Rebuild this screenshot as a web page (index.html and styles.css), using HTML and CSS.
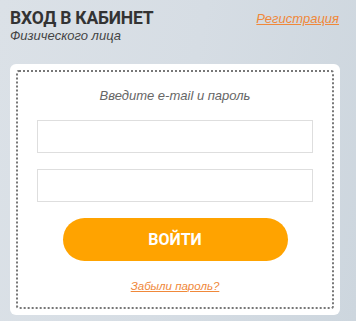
FILE: index.html
```html
<!DOCTYPE html>
<html lang="ru">
  <head>
    <meta charset="UTF-8" />
    <title>Вход в кабинет</title>
    <link rel="stylesheet" href="styles.css">
  </head>
  <body>
    <div class="page">
      <div class="head">
        <div class="title-box">
          <h1 class="title">ВХОД В КАБИНЕТ</h1>
          <p class="subtitle">Физического лица</p>
        </div>
        <a href="#" class="reg">Регистрация</a>
      </div>
      <div class="card">
        <form class="form">
          <p class="hint">Введите e-mail и пароль</p>
          <input type="text" class="field">
          <input type="password" class="field">
          <button type="button" class="btn">ВОЙТИ</button>
          <a href="#" class="forgot">Забыли пароль?</a>
        </form>
      </div>
    </div>
  </body>
</html>
```

FILE: styles.css
```css
* {
  margin: 0;
  padding: 0;
  box-sizing: border-box;
}
html,
body {
  height: 100%;
}
body {
  background: linear-gradient(100deg, #dbe1e7 0%, #d6dde4 50%, #cdd6de 100%);
  font-family: "Liberation Sans", Arial, sans-serif;
  overflow: hidden;
}

.page {
  width: 356px;
  padding: 8px 16px 0 10px;
}

.head {
  display: flex;
  justify-content: space-between;
  align-items: flex-start;
  height: 56px;
}
.title {
  font-family: Roboto, sans-serif;
  font-size: 17.5px;
  font-weight: 700;
  color: #333;
  line-height: 20px;
  letter-spacing: -0.2px;
}
.subtitle {
  font-style: italic;
  font-size: 13px;
  color: #444;
  line-height: 15px;
}
.reg {
  margin-top: 3px;
  margin-right: 1px;
  font-style: italic;
  font-size: 13px;
  color: #f0883a;
  text-decoration: underline;
}

/* белая карточка с пунктирной рамкой */
.card {
  width: 330px;
  height: 251px;
  background-color: #fff;
  border-radius: 6px;
  padding: 6px;
}
.form {
  height: 100%;
  border: 2px dotted #777;
  border-radius: 3px;
  display: flex;
  flex-direction: column;
  align-items: center;
  padding-top: 16px;
}
.hint {
  font-style: italic;
  font-size: 13px;
  color: #666;
  line-height: 16px;
  margin-bottom: 16px;
}
.field {
  width: 276px;
  height: 33px;
  border: 1px solid #dedede;
  background-color: #fff;
  margin-bottom: 16px;
  outline: none;
}
.btn {
  width: 225px;
  height: 43px;
  border: none;
  border-radius: 22px;
  background-color: #ffa300;
  color: #fff;
  font-family: Roboto, sans-serif;
  font-size: 16px;
  font-weight: 700;
  cursor: pointer;
}
.forgot {
  margin-top: 19px;
  font-style: italic;
  font-size: 11.5px;
  color: #f0883a;
  text-decoration: underline;
}
```
